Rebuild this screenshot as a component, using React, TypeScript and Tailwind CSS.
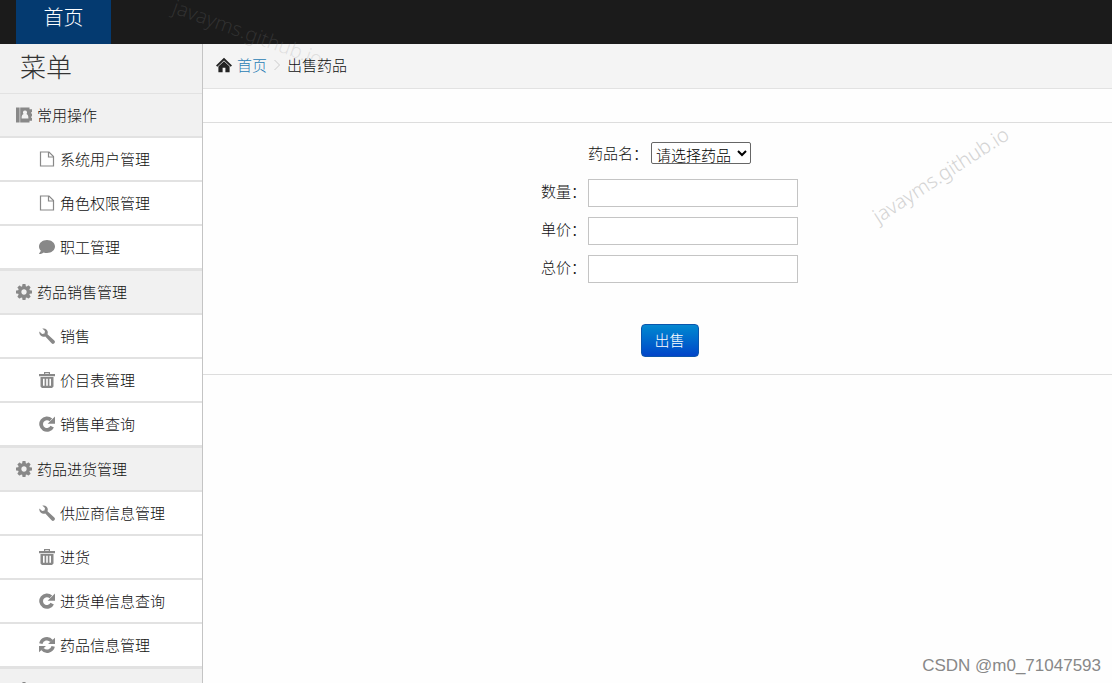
import React, { FC, memo, useState } from 'react';
import { FaComment } from 'react-icons/fa';

type IconProps = { className?: string };

type MenuItem = {
  label: string;
  icon: FC<IconProps>;
};

type MenuGroup = MenuItem & {
  items: MenuItem[];
};

const HomeIcon: FC<IconProps> = ({ className }) => (
  <svg viewBox="0 0 16 16" fill="currentColor" className={className}>
    <path d="M8 0.8 0 8.4l1.3 1.3L8 3.4l6.7 6.3L16 8.4z" />
    <path d="M8 4.2 2.4 9.6v5.6h4.2v-4.4h2.8v4.4h4.2V9.6z" />
  </svg>
);

const BookIcon: FC<IconProps> = ({ className }) => (
  <svg viewBox="0 0 16 16" fill="currentColor" className={className}>
    <path d="M0 .5h3.6v15H0z" />
    <path
      fillRule="evenodd"
      d="M4.2.5h9.3v1.8H16v3h-1v1.2h1v3h-1v1.2h1v3h-2.5v1.8H4.2zM9 3.6a2 2 0 0 0-1.4 3.5c-1.3.5-2 1.7-2 4.3h6.8c0-2.6-.7-3.8-2-4.3A2 2 0 0 0 9 3.6z"
    />
  </svg>
);

const FileIcon: FC<IconProps> = ({ className }) => (
  <svg
    viewBox="0 0 16 16"
    fill="none"
    stroke="currentColor"
    strokeWidth="1.2"
    className={className}
  >
    <path d="M1.500 1h8.500l4.500 4.500v9.500h-13z" />
    <path d="M9.500 1v5h5" />
  </svg>
);

const CogIcon: FC<IconProps> = ({ className }) => (
  <svg
    viewBox="128 128 1536 1536"
    fill="currentColor"
    className={className}
  >
    <path d="M1152 896q0-106-75-181t-181-75-181 75-75 181 75 181 181 75 181-75 75-181zm512-109v222q0 12-8 23t-20 13l-185 28q-19 54-39 91 35 50 107 138 10 12 10 25t-9 23q-27 37-99 108t-94 71q-12 0-26-9l-138-108q-44 23-91 38-16 136-29 186-7 28-36 28h-222q-14 0-24.500-8.500t-11.500-21.500l-28-184q-49-16-90-37l-141 107q-10 9-25 9-14 0-25-11-126-114-165-168-7-10-7-23 0-12 8-23 15-21 51-66.500t54-70.500q-27-50-41-99l-183-27q-13-2-21-12.500t-8-23.500v-222q0-12 8-23t19-13l186-28q14-46 39-92-40-57-107-138-10-12-10-24 0-10 9-23 26-36 98.500-107.500t94.500-71.500q13 0 26 10l138 107q44-23 91-38 16-136 29-186 7-28 36-28h222q14 0 24.500 8.500t11.500 21.500l28 184q49 16 90 37l142-107q9-9 24-9 13 0 25 10 129 119 165 170 7 8 7 22 0 12-8 23-15 21-51 66.500t-54 70.500q26 50 41 98l183 28q13 2 21 12.500t8 23.500z" />
  </svg>
);

const WrenchIcon: FC<IconProps> = ({ className }) => (
  <svg viewBox="0 0 16 16" fill="currentColor" className={className}>
    <path d="M3.300.6a4.300 4.300 0 0 1 5.200 5.600l6.800 6.300a1.900 1.900 0 0 1-2.700 2.700L6.300 8.400A4.300 4.300 0 0 1 .4 3.600l2.700 2.500 2.400-.7.5-2.300z" />
  </svg>
);

const TrashIcon: FC<IconProps> = ({ className }) => (
  <svg viewBox="0 0 16 16" fill="currentColor" className={className}>
    <path
      fillRule="evenodd"
      d="M5 0h6v2h5v2.200H0V2h5zM6.200 1.200V2h3.600v-.8z"
    />
    <path
      fillRule="evenodd"
      d="M1.500 5h13v9.500L13 16H3l-1.500-1.500zM4 6.800v7h1.600v-7zM7.200 6.800v7h1.600v-7zM10.400 6.800v7H12v-7z"
    />
  </svg>
);

const RepeatIcon: FC<IconProps> = ({ className }) => (
  <svg viewBox="0 0 16 16" fill="currentColor" className={className}>
    <path
      d="M13.200 10.600A5.800 5.800 0 1 1 11.900 3.900"
      fill="none"
      stroke="currentColor"
      strokeWidth="3.800"
    />
    <path d="M16 .6v7.200H8.600z" />
  </svg>
);

const RefreshIcon: FC<IconProps> = ({ className }) => (
  <svg viewBox="0 0 16 16" fill="currentColor" className={className}>
    <path
      d="M1.800 6.600A6.200 6.200 0 0 1 12.600 4M14.200 9.400A6.200 6.200 0 0 1 3.400 12"
      fill="none"
      stroke="currentColor"
      strokeWidth="3.400"
    />
    <path d="M16 .8v6.200H9zM0 15.200V9h7z" />
  </svg>
);

const menu: MenuGroup[] = [
  {
    label: '常用操作',
    icon: BookIcon,
    items: [
      { label: '系统用户管理', icon: FileIcon },
      { label: '角色权限管理', icon: FileIcon },
      { label: '职工管理', icon: FaComment },
    ],
  },
  {
    label: '药品销售管理',
    icon: CogIcon,
    items: [
      { label: '销售', icon: WrenchIcon },
      { label: '价目表管理', icon: TrashIcon },
      { label: '销售单查询', icon: RepeatIcon },
    ],
  },
  {
    label: '药品进货管理',
    icon: CogIcon,
    items: [
      { label: '供应商信息管理', icon: WrenchIcon },
      { label: '进货', icon: TrashIcon },
      { label: '进货单信息查询', icon: RepeatIcon },
      { label: '药品信息管理', icon: RefreshIcon },
    ],
  },
  { label: '药品库存管理', icon: CogIcon, items: [] },
];

const Sidebar: FC = memo(() => (
  <nav className="w-[203px] shrink-0 border-r border-[#c4c4c4] bg-white">
    <h2 className="h-[49px] bg-[#f1f1f1] pl-5 text-[26px] leading-11 text-[#333]">
      菜单
    </h2>
    {menu.map((group) => (
      <section key={group.label} className="border-t border-[#e2e2e2]">
        <a
          href="#"
          className="flex h-11 items-center gap-[5px] border-b-2 border-[#e2e2e2] bg-[#f1f1f1] pl-4"
        >
          <group.icon className="size-4 text-[#888]" />
          {group.label}
        </a>
        <ul>
          {group.items.map((item) => (
            <li key={item.label}>
              <a
                href="#"
                className="flex h-11 items-center gap-[5px] border-b-2 border-[#e2e2e2] pl-[39px]"
              >
                <item.icon className="size-4 text-[#888]" />
                {item.label}
              </a>
            </li>
          ))}
        </ul>
      </section>
    ))}
  </nav>
));

const fields = [
  { id: 'count', label: '数量：' },
  { id: 'price', label: '单价：' },
  { id: 'total', label: '总价：' },
];

const SellForm: FC = memo(() => {
  const [values, setValues] = useState<Record<string, string>>({});

  return (
    <form
      className="flex flex-col items-center border-b border-[#ddd] pt-[19px] pb-[17px] pl-6"
      onSubmit={(e) => e.preventDefault()}
    >
      <div className="mb-[14px] flex items-center">
        <label htmlFor="medicine" className="w-[63px]">
          药品名：
        </label>
        <select
          id="medicine"
          className="h-[22px] w-[100px] appearance-auto rounded-[2px] border border-[#666] bg-white text-black"
        >
          <option>请选择药品</option>
        </select>
      </div>
      {fields.map((field) => (
        <div key={field.id} className="mb-[10px] flex">
          <label htmlFor={field.id} className="w-[47px] leading-6">
            {field.label}
          </label>
          <input
            type="text"
            id={field.id}
            value={values[field.id] ?? ''}
            onChange={(e) =>
              setValues({ ...values, [field.id]: e.target.value })
            }
            className="h-7 w-[210px] border border-[#c4c4c4] bg-white px-2 outline-none focus:border-blue-500"
          />
        </div>
      ))}
      <button
        type="submit"
        className="mt-[31px] h-[33px] w-[58px] rounded border border-[#0a56ad] bg-linear-to-b from-[#0888d0] to-[#0444c8] text-white"
      >
        出售
      </button>
    </form>
  );
});

export default function App() {
  return (
    <div className="relative flex h-screen flex-col overflow-hidden bg-white pr-[3px] font-['Noto_Sans_CJK_SC',sans-serif] text-[15px] font-light text-[#111]">
      <header className="flex h-11 shrink-0 bg-[#1b1b1b] pl-4">
        <a
          href="#"
          className="w-[95px] bg-[#043a70] text-center text-[20px] leading-[34px] text-white"
        >
          首页
        </a>
      </header>
      <div className="flex min-h-0 flex-1">
        <Sidebar />
        <main className="flex-1 bg-[#fefefe]">
          <div className="flex h-[45px] items-center border-b border-[#e2e2e2] bg-[#f4f4f4] pb-[2px] pl-[13px]">
            <HomeIcon className="size-4 text-[#222]" />
            <a href="#" className="ml-[5px] text-[#2a7db5]">
              首页
            </a>
            <svg
              viewBox="0 0 8 12"
              fill="none"
              stroke="#ccc"
              className="mx-[6px] h-3 w-2"
            >
              <path d="M1.500 1l5 5-5 5" />
            </svg>
            <span>出售药品</span>
          </div>
          <div className="h-[34px] border-b border-[#ddd]" />
          <SellForm />
        </main>
      </div>
      <span className="pointer-events-none absolute top-[18px] left-[169px] rotate-20 font-['Noto_Sans'] text-[20px] text-[#888]/20">
        javayms.github.io
      </span>
      <span className="pointer-events-none absolute top-[160px] right-[95px] -rotate-33 font-['Noto_Sans'] text-[20px] text-[#d4d4d4]">
        javayms.github.io
      </span>
      <span className="pointer-events-none absolute right-[14px] bottom-[5px] font-['Liberation_Sans'] text-[17px] text-[#888]">
        CSDN @m0_71047593
      </span>
    </div>
  );
}
